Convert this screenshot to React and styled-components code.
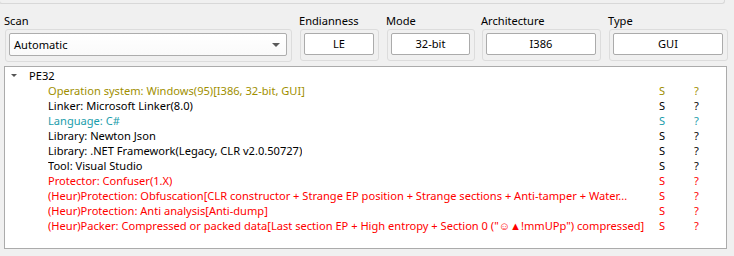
import React from "react";
import styled, { createGlobalStyle } from "styled-components";

const GlobalStyle = createGlobalStyle`
*{
  box-sizing: border-box;
  margin: 0;
  padding: 0;
}
body{
  background-color: #f0f0f0;
  font-family: "Noto Sans", "Liberation Sans", sans-serif;
  font-size: 11.1px;
  color: #000;
}
`

const Page = styled.div`
width: 734px;
height: 256px;
padding-left: 5px;
overflow: hidden;
`
const TopEdge = styled.div`
height: 4px;
width: 726px;
margin-left: -6px;
border: 1px solid #d8d8d8;
border-top: none;
border-radius: 0 0 3px 3px;
`
const Header = styled.div`
display: flex;
margin-top: 9px;
`
const Field = styled.div`
display: flex;
flex-direction: column;
width: ${(p) => p.width}px;
margin-right: ${(p) => p.gap || 0}px;
`
const Label = styled.div`
height: 16px;
line-height: 16px;
margin-left: -1px;
white-space: nowrap;
`
const Frame = styled.div`
border: 1px solid #dcdcdc;
border-radius: 3px;
padding: 3px 4px 5px 3px;
`
const ValueBox = styled.div`
height: 22px;
line-height: 20px;
background: #fff;
border: 1px solid #ababab;
border-radius: 2px;
text-align: center;
`
const Combo = styled.div`
height: 23px;
display: flex;
align-items: center;
justify-content: space-between;
padding: 0 6px 0 4px;
background: linear-gradient(#ffffff, #fafafa);
border: 1px solid #adadad;
border-radius: 2px;
`
const Arrow = styled.span`
width: 0;
height: 0;
border-left: ${(p) => p.size}px solid transparent;
border-right: ${(p) => p.size}px solid transparent;
border-top: ${(p) => p.depth}px solid ${(p) => p.color};
margin-right: ${(p) => p.gap || 0}px;
`
const Tree = styled.div`
margin-top: 4px;
margin-left: -1px;
width: 723px;
height: 183px;
background: #fff;
border: 1px solid #ababab;
padding-top: 1px;
`
const Row = styled.div`
display: grid;
grid-template-columns: 651px 35px 1fr;
height: 15px;
line-height: 15px;
color: ${(p) => p.color || "#000"};
white-space: nowrap;
`
const Cell = styled.div`
display: flex;
align-items: center;
min-width: 0;
overflow: hidden;
padding-left: ${(p) => p.indent || 3}px;
`
const CellText = styled.span`
overflow: hidden;
text-overflow: ellipsis;
`

const OLIVE = "#a08f00";
const TEAL = "#1a9dab";
const RED = "#ff0000";

const results = [
  { text: "Operation system: Windows(95)[I386, 32-bit, GUI]", color: OLIVE },
  { text: "Linker: Microsoft Linker(8.0)" },
  { text: "Language: C#", color: TEAL },
  { text: "Library: Newton Json" },
  { text: "Library: .NET Framework(Legacy, CLR v2.0.50727)" },
  { text: "Tool: Visual Studio" },
  { text: "Protector: Confuser(1.X)", color: RED },
  { text: "(Heur)Protection: Obfuscation[CLR constructor + Strange EP position + Strange sections + Anti-tamper + Water...", color: RED },
  { text: "(Heur)Protection: Anti analysis[Anti-dump]", color: RED },
  { text: "(Heur)Packer: Compressed or packed data[Last section EP + High entropy + Section 0 (\"\u263A\u25B2!mmUPp\") compressed]", color: RED },
];

const fields = [
  { label: "Endianness", value: "LE", width: 79, gap: 8 },
  { label: "Mode", value: "32-bit", width: 88, gap: 7 },
  { label: "Architecture", value: "I386", width: 119, gap: 8 },
  { label: "Type", value: "GUI", width: 119 },
];

export default function App() {
  return (
    <Page>
      <GlobalStyle />
      <TopEdge />
      <Header>
        <Field width={287} gap={8}>
          <Label>Scan</Label>
          <Frame>
            <Combo>
              <span>Automatic</span>
              <Arrow size={4} depth={4} color="#5a5a5a" />
            </Combo>
          </Frame>
        </Field>
        {fields.map((f) => (
          <Field key={f.label} width={f.width} gap={f.gap}>
            <Label>{f.label}</Label>
            <Frame>
              <ValueBox>{f.value}</ValueBox>
            </Frame>
          </Field>
        ))}
      </Header>
      <Tree>
        <Row>
          <Cell indent={6}>
            <Arrow size={3} depth={3} gap={12} color="#555" />
            <CellText>PE32</CellText>
          </Cell>
        </Row>
        {results.map((r) => (
          <Row key={r.text} color={r.color}>
            <Cell indent={43}>
              <CellText>{r.text}</CellText>
            </Cell>
            <Cell>S</Cell>
            <Cell>?</Cell>
          </Row>
        ))}
      </Tree>
    </Page>
  );
}
